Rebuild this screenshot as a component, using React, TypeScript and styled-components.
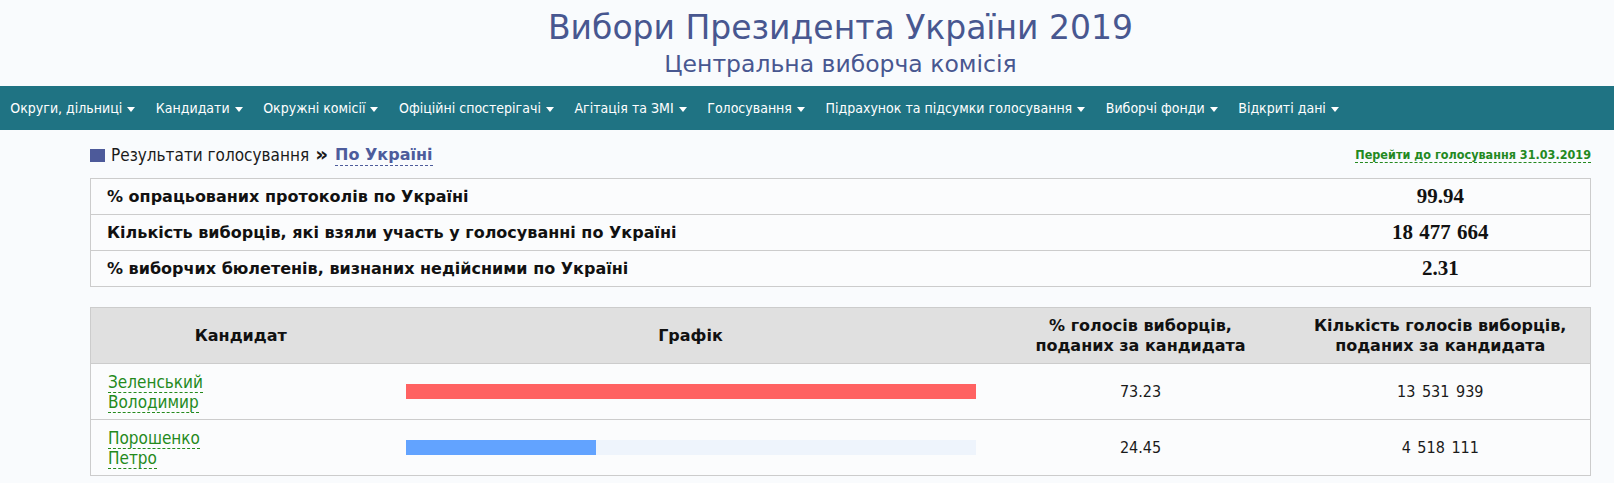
import React from 'react';
import styled, { createGlobalStyle } from 'styled-components';

const GlobalStyle = createGlobalStyle`
  html, body {
    margin: 0;
    padding: 0;
    background: #f9fbfd;
  }
  body {
    font-family: 'DejaVu Sans Condensed', 'DejaVu Sans', sans-serif;
    color: #1a1a1a;
  }
`;

const wide = `'DejaVu Sans', 'Liberation Sans', sans-serif`;

const Container = styled.div`
  padding: 0 23px 0 90px;
`;

const Header = styled.header`
  text-align: center;
  padding-top: 8px;
  height: 86px;
  box-sizing: border-box;
  font-family: ${wide};
`;

const Title = styled.h1`
  margin: 0;
  font-size: 33px;
  line-height: 40px;
  font-weight: normal;
  color: #485790;
`;

const Subtitle = styled.h2`
  margin: 2px 0 0;
  font-size: 23.5px;
  line-height: 28px;
  font-weight: normal;
  color: #485790;
`;

const Nav = styled.nav`
  display: flex;
  align-items: center;
  height: 44px;
  background: #1f7383;
`;

const NavItem = styled.span`
  display: flex;
  align-items: center;
  padding: 0 10.3px;
  font-size: 14px;
  color: #fff;
  white-space: nowrap;
`;

const Caret = styled.span`
  width: 0;
  height: 0;
  margin-left: 5px;
  margin-top: 2px;
  border-left: 4px solid transparent;
  border-right: 4px solid transparent;
  border-top: 5px solid #fff;
`;

const Crumbs = styled.div`
  display: flex;
  align-items: center;
  justify-content: space-between;
  padding-top: 15px;
  height: 20px;
  margin-bottom: 13px;
`;

const CrumbLeft = styled.div`
  display: flex;
  align-items: center;
  font-size: 17px;
  line-height: 20px;
  color: #1a1a1a;
`;

const Square = styled.span`
  width: 15px;
  height: 13px;
  margin-right: 6px;
  background: #4d5a9a;
`;

const Arrows = styled.b`
  margin: -2px 7px 0 6px;
  font-family: ${wide};
  font-size: 20px;
`;

const Current = styled.span`
  font-family: ${wide};
  font-size: 16px;
  font-weight: bold;
  color: #4d5c9c;
  border-bottom: 1px dashed #4d5c9c;
`;

const SwitchLink = styled.span`
  font-size: 12.5px;
  font-weight: bold;
  color: #23891f;
  border-bottom: 1px dashed #23891f;
  line-height: 15px;
`;

const Table = styled.table<{ $gap?: boolean }>`
  width: 100%;
  border-collapse: collapse;
  margin-bottom: ${(p) => (p.$gap ? '20px' : '0')};
  background: #fbfcfd;
`;

const StatRow = styled.tr`
  height: 36px;
  border: 1px solid #cccccc;
`;

const StatLabel = styled.td`
  padding: 0 0 0 16px;
  font-family: ${wide};
  font-size: 16px;
  font-weight: bold;
  color: #111;
`;

const StatValue = styled.td`
  width: 20%;
  text-align: center;
  font-family: 'Liberation Serif', serif;
  font-size: 21px;
  font-weight: bold;
  word-spacing: 1px;
  color: #111;
`;

const HeadCell = styled.th<{ $w: string }>`
  width: ${(p) => p.$w};
  height: 55px;
  padding: 0;
  background: #e0e0e0;
  font-family: ${wide};
  font-size: 16px;
  line-height: 20px;
  font-weight: bold;
  color: #111;
  text-align: center;
`;

const Row = styled.tr`
  border: 1px solid #cccccc;
`;

const Cell = styled.td<{ $align?: string }>`
  height: 55px;
  padding: 0;
  text-align: ${(p) => p.$align || 'center'};
  font-size: 16px;
  word-spacing: 2px;
  color: #1a1a1a;
`;

const NameCell = styled(Cell)`
  padding-left: 17px;
  font-size: 17px;
  line-height: 20px;
  word-spacing: 0;
`;

const Name = styled.span`
  color: #248a1c;
  border-bottom: 1px dashed #248a1c;
`;

const BarCell = styled(Cell)`
  padding: 0 15px;
`;

const Track = styled.div`
  height: 15px;
  background: #eef4fc;
`;

const Fill = styled.div<{ $color: string }>`
  height: 100%;
  background: ${(p) => p.$color};
`;

const menu = [
  'Округи, дільниці',
  'Кандидати',
  'Окружні комісії',
  'Офіційні спостерігачі',
  'Агітація та ЗМІ',
  'Голосування',
  'Підрахунок та підсумки голосування',
  'Виборчі фонди',
  'Відкриті дані',
];

const stats = [
  ['% опрацьованих протоколів по Україні', '99.94'],
  ['Кількість виборців, які взяли участь у голосуванні по Україні', '18 477 664'],
  ['% виборчих бюлетенів, визнаних недійсними по Україні', '2.31'],
];

const candidates = [
  { last: 'Зеленський', first: 'Володимир', pct: 73.23, votes: '13 531 939', color: '#ff6262' },
  { last: 'Порошенко', first: 'Петро', pct: 24.45, votes: '4 518 111', color: '#62a3ff' },
];

const maxPct = Math.max(...candidates.map((c) => c.pct));

const App = (): React.JSX.Element => (
  <>
    <GlobalStyle />
    <Container>
      <Header>
        <Title>Вибори Президента України 2019</Title>
        <Subtitle>Центральна виборча комісія</Subtitle>
      </Header>
    </Container>
    <Nav>
      {menu.map((m) => (
        <NavItem key={m}>
          {m}
          <Caret />
        </NavItem>
      ))}
    </Nav>
    <Container>
      <Crumbs>
        <CrumbLeft>
          <Square />
          Результати голосування
          <Arrows>»</Arrows>
          <Current>По Україні</Current>
        </CrumbLeft>
        <SwitchLink>Перейти до голосування 31.03.2019</SwitchLink>
      </Crumbs>

      <Table $gap>
        <tbody>
          {stats.map(([label, value]) => (
            <StatRow key={label}>
              <StatLabel>{label}</StatLabel>
              <StatValue>{value}</StatValue>
            </StatRow>
          ))}
        </tbody>
      </Table>

      <Table>
        <thead>
          <Row>
            <HeadCell $w="20%">Кандидат</HeadCell>
            <HeadCell $w="40%">Графік</HeadCell>
            <HeadCell $w="20%">
              % голосів виборців,
              <br />
              поданих за кандидата
            </HeadCell>
            <HeadCell $w="20%">
              Кількість голосів виборців,
              <br />
              поданих за кандидата
            </HeadCell>
          </Row>
        </thead>
        <tbody>
          {candidates.map((c) => (
            <Row key={c.last}>
              <NameCell $align="left">
                <Name>{c.last}</Name>
                <br />
                <Name>{c.first}</Name>
              </NameCell>
              <BarCell>
                <Track>
                  <Fill $color={c.color} style={{ width: `${(c.pct / maxPct) * 100}%` }} />
                </Track>
              </BarCell>
              <Cell>{c.pct.toFixed(2)}</Cell>
              <Cell>{c.votes}</Cell>
            </Row>
          ))}
        </tbody>
      </Table>
    </Container>
  </>
);

export default App;
